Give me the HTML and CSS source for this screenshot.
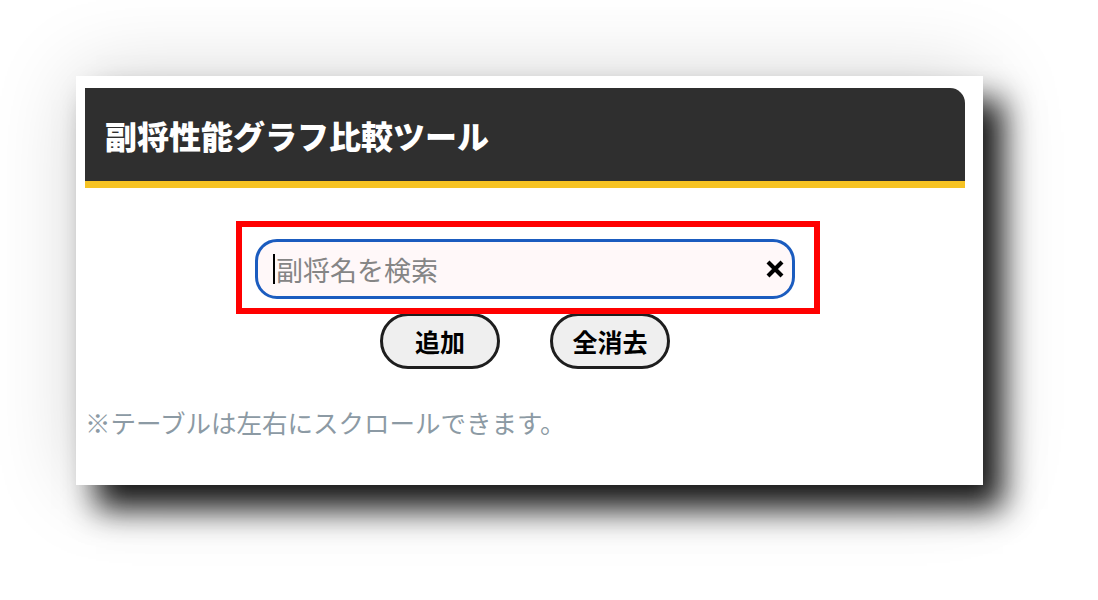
FILE: index.html
```html
<!DOCTYPE html>
<html lang="ja">
<head>
<meta charset="utf-8">
<title>副将性能グラフ比較ツール</title>
<link rel="stylesheet" href="styles.css">
</head>
<body>
<div class="stage">
  <div class="card">
    <div class="header"><h1 class="title">副将性能グラフ比較ツール</h1></div>
    <div class="search">
      <div class="highlight">
        <div class="field">
          <span class="caret"></span>
          <input class="input" type="text" placeholder="副将名を検索">
          <svg class="clear" width="22" height="22" viewBox="0 0 22 22"><path d="M4 4 L18 18 M18 4 L4 18" stroke="#000" stroke-width="4.2" fill="none"/></svg>
        </div>
      </div>
      <div class="buttons">
        <button class="btn">追加</button>
        <button class="btn">全消去</button>
      </div>
    </div>
    <p class="note">※テーブルは左右にスクロールできます。</p>
  </div>
</div>
</body>
</html>
```

FILE: styles.css
```css
html, body {
  margin: 0;
  padding: 0;
  background: #ffffff;
  font-family: "Noto Sans CJK JP", "Noto Sans", sans-serif;
}
.stage {
  padding: 76px 0 0 76px;
  height: 600px;
  box-sizing: border-box;
  overflow: hidden;
}
.card {
  width: 907px;
  height: 409px;
  box-sizing: border-box;
  padding: 12px 18px 0 9px;
  background: #ffffff;
  box-shadow: 20px 24px 30px rgba(0, 0, 0, 0.9), 0 0 80px rgba(0, 0, 0, 0.16);
}
.header {
  height: 93px;
  background: #2f2f2f;
  border-bottom: 7px solid #f6c324;
  border-top-right-radius: 15px;
  display: flex;
  align-items: center;
  padding-left: 20px;
}
.title {
  margin: 0;
  color: #ffffff;
  font-size: 32px;
  font-weight: 900;
  line-height: 1;
  letter-spacing: 0;
}
.search {
  display: flex;
  flex-direction: column;
  align-items: center;
  margin-top: 33px;
}
.highlight {
  position: relative;
  z-index: 2;
  width: 584px;
  height: 93px;
  box-sizing: border-box;
  border: 6px solid #ff0000;
  padding: 12px 19px 9px 13px;
  margin-left: 6px;
  background: #ffffff;
}
.field {
  position: relative;
  height: 60px;
}
.input {
  width: 100%;
  height: 60px;
  box-sizing: border-box;
  border: 3px solid #1b5cbf;
  border-radius: 22px;
  background: #fff8f9;
  padding: 0 50px 0 18px;
  font-family: "Noto Sans CJK JP", sans-serif;
  font-size: 27px;
  color: #222;
  outline: none;
}
.input::placeholder {
  color: #858585;
}
.caret {
  position: absolute;
  left: 18px;
  top: 15px;
  width: 2px;
  height: 30px;
  background: #000;
  z-index: 1;
}
.clear {
  position: absolute;
  right: 9px;
  top: 19px;
}
.buttons {
  display: flex;
  gap: 50px;
  margin-top: -1px;
}
.btn {
  width: 120px;
  height: 56px;
  box-sizing: border-box;
  border: 3px solid #1e1e1e;
  border-radius: 28px;
  background: #efefef;
  color: #000;
  font-family: "Noto Sans CJK JP", sans-serif;
  font-weight: 700;
  font-size: 25px;
  padding: 0;
  line-height: 1;
}
.note {
  margin: 34px 0 0 0;
  color: #8c9aa4;
  font-size: 25.5px;
  line-height: 1.5;
}
```
